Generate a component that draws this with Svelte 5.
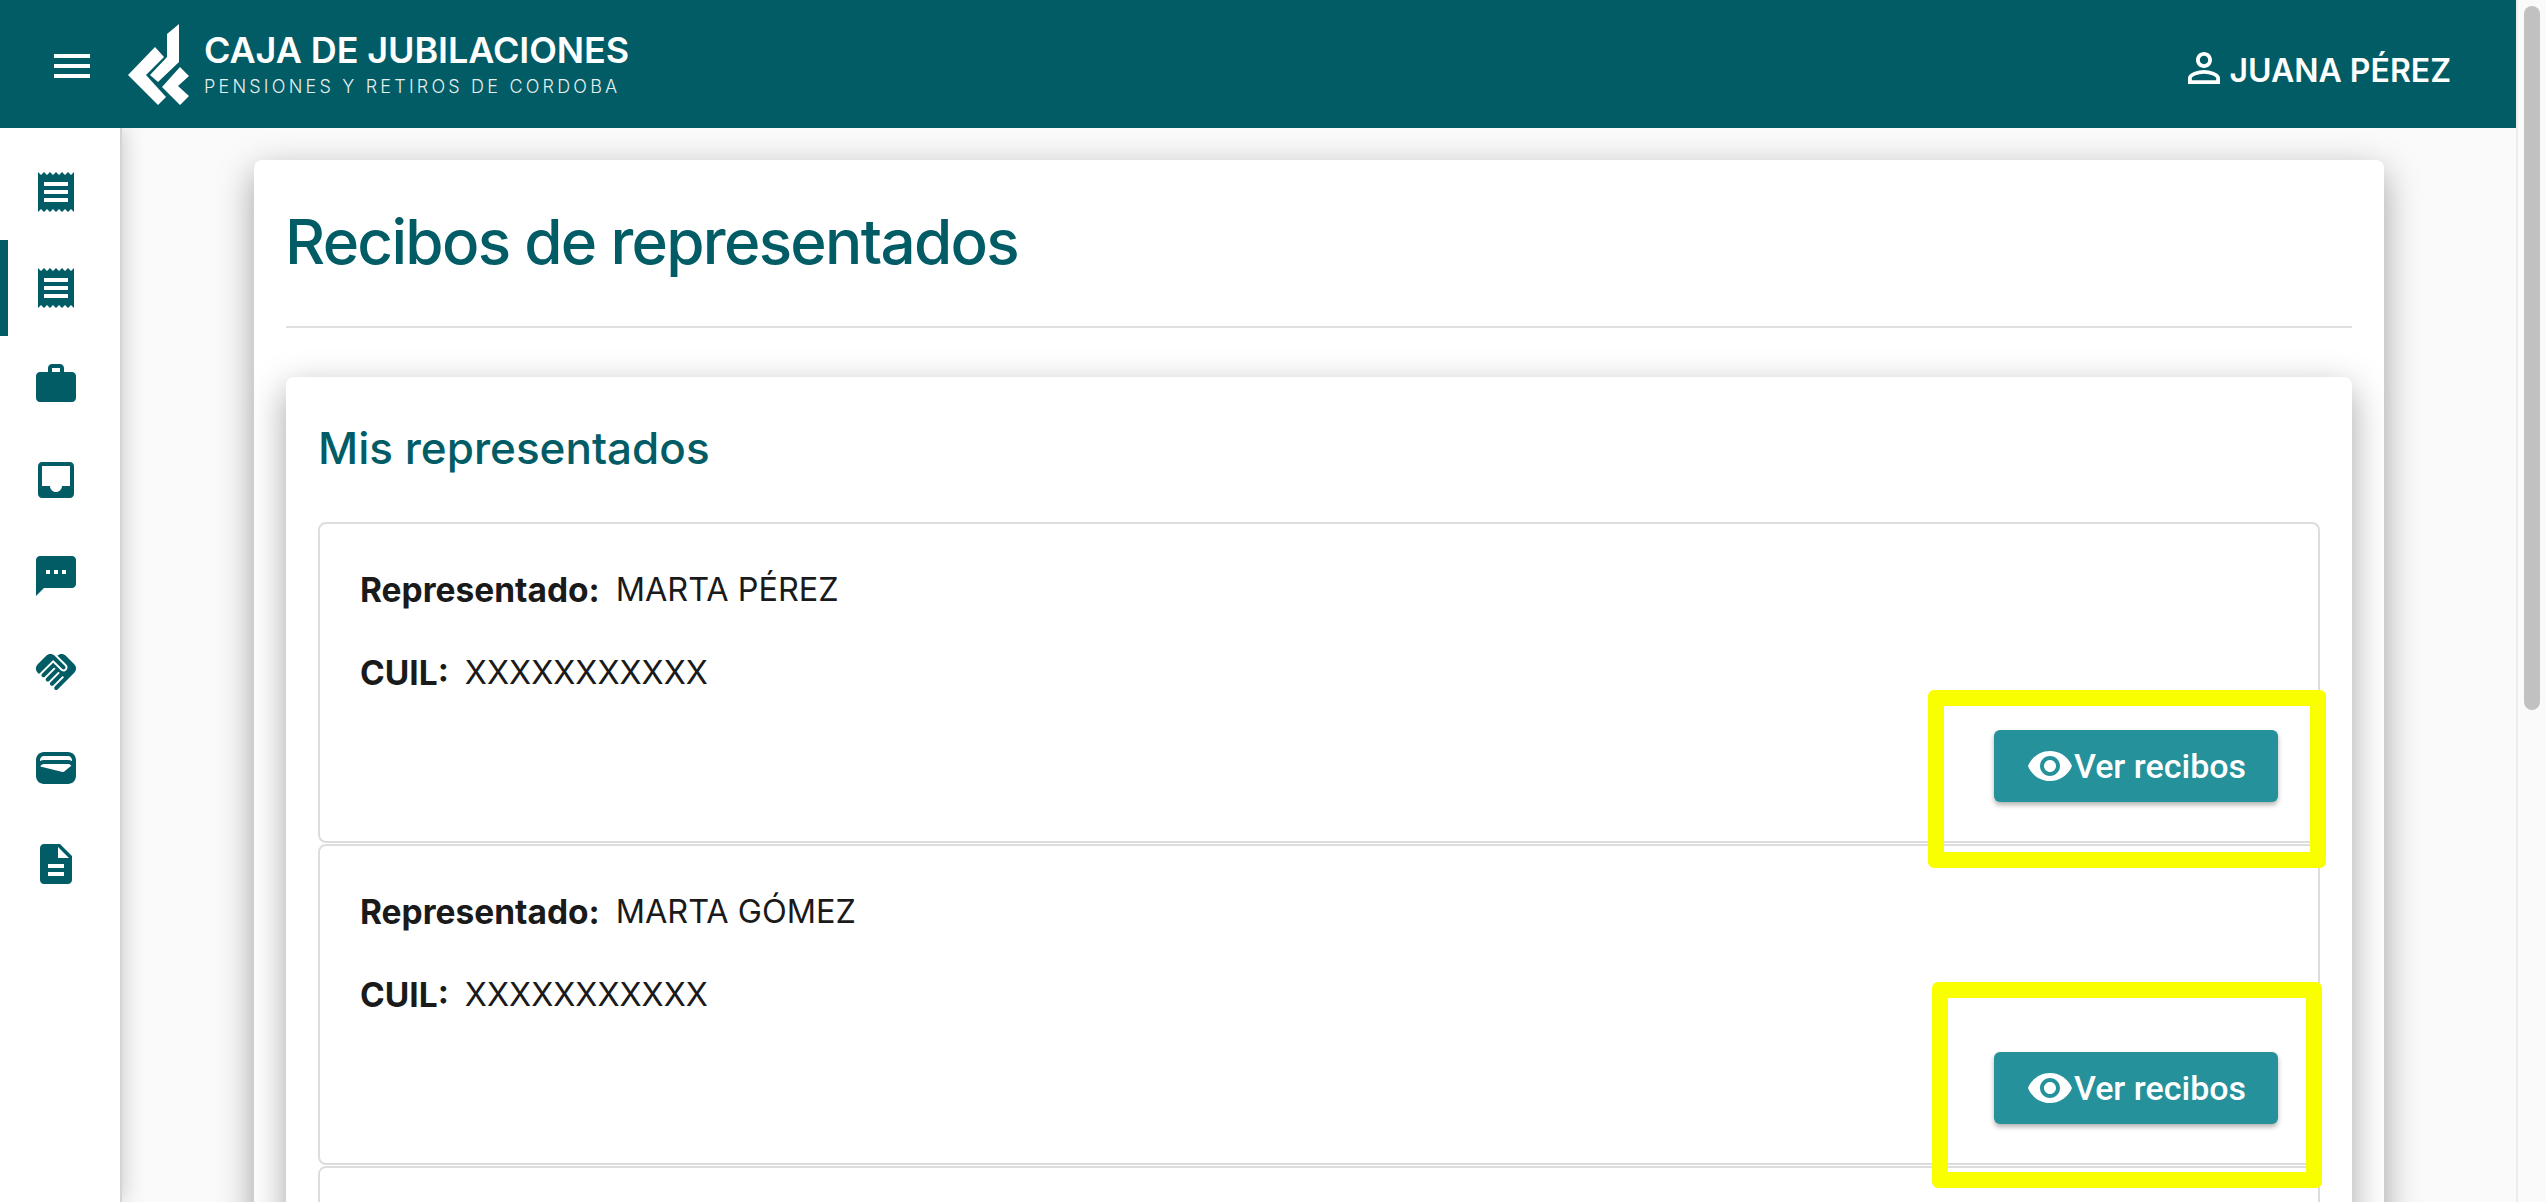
<script>
	const menu = [
		'M18 17H6v-2h12v2zm0-4H6v-2h12v2zm0-4H6V7h12v2zM3 22l1.5-1.5L6 22l1.5-1.5L9 22l1.5-1.5L12 22l1.5-1.5L15 22l1.5-1.5L18 22l1.5-1.5L21 22V2l-1.5 1.5L18 2l-1.5 1.5L15 2l-1.5 1.5L12 2l-1.5 1.5L9 2 7.5 3.5 6 2 4.5 3.5 3 2v20z',
		'M18 17H6v-2h12v2zm0-4H6v-2h12v2zm0-4H6V7h12v2zM3 22l1.5-1.5L6 22l1.5-1.5L9 22l1.5-1.5L12 22l1.5-1.5L15 22l1.5-1.5L18 22l1.5-1.5L21 22V2l-1.5 1.5L18 2l-1.5 1.5L15 2l-1.5 1.5L12 2l-1.5 1.5L9 2 7.5 3.5 6 2 4.5 3.5 3 2v20z',
		'M20 6h-4V4c0-1.11-.89-2-2-2h-4c-1.11 0-2 .89-2 2v2H4c-1.11 0-1.99.89-1.99 2L2 19c0 1.11.89 2 2 2h16c1.11 0 2-.89 2-2V8c0-1.11-.89-2-2-2zm-6 0h-4V4h4v2z',
		'M19 3H4.99c-1.11 0-1.98.89-1.98 2L3 19c0 1.1.88 2 1.99 2H19c1.1 0 2-.9 2-2V5c0-1.11-.9-2-2-2zm0 12h-4c0 1.66-1.35 3-3 3s-3-1.34-3-3H4.99V5H19v10z',
		'M20 2H4c-1.1 0-1.99.9-1.99 2L2 22l4-4h14c1.1 0 2-.9 2-2V4c0-1.1-.9-2-2-2zM9 11H7V9h2v2zm4 0h-2V9h2v2zm4 0h-2V9h2v2z',
		'M16.48 10.41c-.39.39-1.04.39-1.43 0l-4.47-4.46-7.05 7.04-.66-.63c-1.17-1.17-1.17-3.07 0-4.24l4.24-4.24c1.17-1.17 3.07-1.17 4.24 0L16.48 9c.39.39.39 1.02 0 1.41zm.7-2.12c.78.78.78 2.05 0 2.83-1.27 1.27-2.61.22-2.83 0l-3.76-3.76-5.57 5.57c-.39.39-.39 1.02 0 1.41.39.39 1.02.39 1.42 0l4.62-4.62.71.71-4.62 4.62c-.39.39-.39 1.02 0 1.41.39.39 1.02.39 1.42 0l4.62-4.62.71.71-4.62 4.62c-.39.39-.39 1.02 0 1.41.39.39 1.02.39 1.41 0l4.62-4.62.71.71-4.62 4.62c-.39.39-.39 1.02 0 1.41.39.39 1.02.39 1.41 0l8.32-8.34c1.17-1.17 1.17-3.07 0-4.24l-4.24-4.24c-1.15-1.15-3.01-1.17-4.18-.06l4.47 4.47z',
		'M18 4H6C3.79 4 2 5.79 2 8v8c0 2.21 1.79 4 4 4h12c2.21 0 4-1.79 4-4V8c0-2.21-1.79-4-4-4zm-1.86 9.77c-.24.2-.57.28-.88.2L4.15 11.25C4.45 10.52 5.16 10 6 10h12c.67 0 1.26.34 1.63.84l-3.49 2.93zM6 6h12c1.1 0 2 .9 2 2v.55c-.59-.34-1.27-.55-2-.55H6c-.73 0-1.41.21-2 .55V8c0-1.1.9-2 2-2z',
		'M14 2H6c-1.1 0-1.99.9-1.99 2L4 20c0 1.1.89 2 1.99 2H18c1.1 0 2-.9 2-2V8l-6-6zm2 16H8v-2h8v2zm0-4H8v-2h8v2zm-3-5V3.5L18.5 9H13z'
	];

	const people = [
		{ name: 'MARTA PÉREZ', cuil: 'XXXXXXXXXXX', mark: true },
		{ name: 'MARTA GÓMEZ', cuil: 'XXXXXXXXXXX', mark: true },
		{ name: '', cuil: '', mark: false }
	];
</script>

<div class="page">
	<div class="shell">
		<header class="topbar">
			<div class="brand">
				<svg class="burger" viewBox="0 0 24 24"><path d="M3 18h18v-2H3v2zm0-5h18v-2H3v2zm0-7v2h18V6H3z" /></svg>
				<svg class="logo" viewBox="0 0 61 81">
					<polygon points="27,23 36,33 18,51 38,73 30,81 0,51" />
					<polygon points="51,0 51,38 30,58 22,51 39,33 39,10" />
					<polygon points="52,43 61,52 50,62 61,72 52,81 34,63" />
				</svg>
				<div class="brand-text">
					<div class="brand-main">CAJA DE JUBILACIONES</div>
					<div class="brand-sub">PENSIONES Y RETIROS DE CORDOBA</div>
				</div>
			</div>
			<div class="user">
				<svg viewBox="0 0 24 24"><path d="M12 5.9c1.16 0 2.1.94 2.1 2.1s-.94 2.1-2.1 2.1S9.9 9.16 9.9 8s.94-2.1 2.1-2.1m0 9c2.97 0 6.1 1.46 6.1 2.1v1.1H5.9V17c0-.64 3.13-2.1 6.1-2.1M12 4C9.79 4 8 5.79 8 8s1.79 4 4 4 4-1.79 4-4-1.79-4-4-4zm0 9c-2.67 0-8 1.34-8 4v3h16v-3c0-2.66-5.33-4-8-4z" /></svg>
				<span>JUANA PÉREZ</span>
			</div>
		</header>

		<div class="body">
			<nav class="sidebar">
				{#each menu as d, i}
					<div class="nav-item" class:active={i === 1}>
						<svg viewBox="0 0 24 24"><path {d} /></svg>
					</div>
				{/each}
			</nav>

			<main class="main">
				<section class="card">
					<h1>Recibos de representados</h1>
					<hr />
					<section class="inner">
						<h2>Mis representados</h2>
						{#each people as p}
							<article class="item">
								{#if p.name}
									<p class="row"><b>Representado:</b><span>{p.name}</span></p>
									<p class="row"><b>CUIL:</b><span>{p.cuil}</span></p>
									<div class="actions">
										<button>
											<svg viewBox="0 0 24 24"><path d="M12 4.5C7 4.5 2.73 7.61 1 12c1.73 4.39 6 7.5 11 7.5s9.27-3.11 11-7.5c-1.73-4.39-6-7.5-11-7.5zM12 17c-2.76 0-5-2.24-5-5s2.24-5 5-5 5 2.24 5 5-2.24 5-5 5zm0-8c-1.66 0-3 1.34-3 3s1.34 3 3 3 3-1.34 3-3-1.34-3-3-3z" /></svg>
											Ver recibos
										</button>
										{#if p.mark}
											<div class="mark" class:second={p.name === 'MARTA GÓMEZ'}></div>
										{/if}
									</div>
								{/if}
							</article>
						{/each}
					</section>
				</section>
			</main>
		</div>
	</div>

	<div class="scrollbar"><div class="thumb"></div></div>
</div>

<style>
	:global(body) {
		margin: 0;
		background: #fafafa;
	}
	.page {
		display: flex;
		width: 2546px;
		height: 1202px;
		overflow: hidden;
		font-family: Inter, 'Liberation Sans', sans-serif;
		background: #fafafa;
	}
	.shell {
		flex: 1;
		min-width: 0;
		display: flex;
		flex-direction: column;
	}
	.topbar {
		height: 128px;
		flex: none;
		background: #015c65;
		color: #fff;
		display: flex;
		align-items: center;
		justify-content: space-between;
		position: relative;
		z-index: 3;
	}
	.brand {
		display: flex;
		align-items: center;
		padding-left: 48px;
	}
	.burger {
		width: 48px;
		height: 48px;
		fill: #fff;
		margin-top: 4px;
	}
	.logo {
		width: 61px;
		height: 81px;
		fill: #fff;
		margin-left: 32px;
	}
	.brand-text {
		margin-left: 15px;
	}
	.brand-main {
		font-size: 36px;
		font-weight: 600;
		line-height: 40px;
		letter-spacing: -0.1px;
	}
	.brand-sub {
		font-size: 18px;
		font-weight: 300;
		line-height: 22px;
		letter-spacing: 3.2px;
		opacity: 0.9;
		margin-top: 6px;
	}
	.user {
		display: flex;
		align-items: center;
		gap: 1px;
		padding: 12px 65px 0 0;
		font-size: 32px;
		font-weight: 600;
	}
	.user svg {
		width: 48px;
		height: 48px;
		fill: #fff;
		margin-top: -4px;
	}
	.body {
		flex: 1;
		min-height: 0;
		display: flex;
	}
	.sidebar {
		width: 120px;
		flex: none;
		background: #fff;
		padding-top: 16px;
		border-right: 2px solid #d4d4d4;
		box-sizing: content-box;
		box-shadow: 0 0 22px rgba(0, 0, 0, 0.22);
		position: relative;
		z-index: 2;
	}
	.nav-item {
		height: 96px;
		display: flex;
		align-items: center;
		justify-content: center;
		box-sizing: border-box;
		padding-right: 8px;
	}
	.nav-item.active {
		border-left: 8px solid #015c65;
		padding-right: 16px;
	}
	.nav-item svg {
		width: 48px;
		height: 48px;
		fill: #015c65;
	}
	.main {
		flex: 1;
		min-width: 0;
		padding: 32px 132px 0 132px;
	}
	.card {
		background: #fff;
		border-radius: 8px;
		padding: 32px;
		box-shadow: 0 12px 36px rgba(0, 0, 0, 0.36);
	}
	h1 {
		margin: 2px 0 0 -1px;
		font-size: 62px;
		font-weight: 550;
		line-height: 96px;
		letter-spacing: -1.7px;
		color: #015c65;
	}
	hr {
		border: 0;
		height: 2px;
		background: #e0e0e0;
		margin: 36px 0 49px;
	}
	.inner {
		background: #fff;
		border-radius: 8px;
		padding: 32px;
		box-shadow: 0 12px 36px rgba(0, 0, 0, 0.36);
	}
	h2 {
		margin: 0 0 35px;
		font-size: 44px;
		font-weight: 550;
		line-height: 78px;
		color: #015c65;
	}
	.item {
		height: 321px;
		box-sizing: border-box;
		border: 2px solid #ddd;
		border-radius: 8px;
		padding: 42px 40px 39px;
		margin-bottom: 1px;
		display: flex;
		flex-direction: column;
	}
	.row {
		margin: 0;
		display: flex;
		gap: 16px;
		font-size: 32px;
		line-height: 48px;
		color: #1a1a1a;
	}
	.row + .row {
		margin-top: 35px;
	}
	.row b {
		font-weight: 700;
		font-size: 33.5px;
	}
	.row span {
		font-size: 32.4px;
	}
	.actions {
		margin-top: auto;
		display: flex;
		justify-content: flex-end;
		position: relative;
	}
	button {
		width: 284px;
		height: 72px;
		box-sizing: border-box;
		border: 0;
		border-radius: 6px;
		background: #24919b;
		color: #fff;
		display: flex;
		align-items: center;
		justify-content: center;
		font-family: Roboto, sans-serif;
		font-size: 34px;
		font-weight: 500;
		box-shadow: 0 3px 5px rgba(0, 0, 0, 0.3);
		padding: 0;
	}
	button svg {
		width: 48px;
		height: 48px;
		fill: #fff;
		flex: none;
	}
	.mark {
		position: absolute;
		right: -48px;
		top: -40px;
		width: 398px;
		height: 178px;
		box-sizing: border-box;
		border: 16px solid #faff00;
		border-radius: 6px;
	}
	.mark.second {
		right: -44px;
		top: -70px;
		width: 390px;
		height: 206px;
	}
	.scrollbar {
		width: 30px;
		flex: none;
		background: #fafafa;
		border-left: 2px solid #ededed;
		box-sizing: border-box;
		padding: 6px 6px 0 6px;
	}
	.thumb {
		height: 704px;
		background: #c1c1c1;
		border-radius: 8px;
	}
</style>
